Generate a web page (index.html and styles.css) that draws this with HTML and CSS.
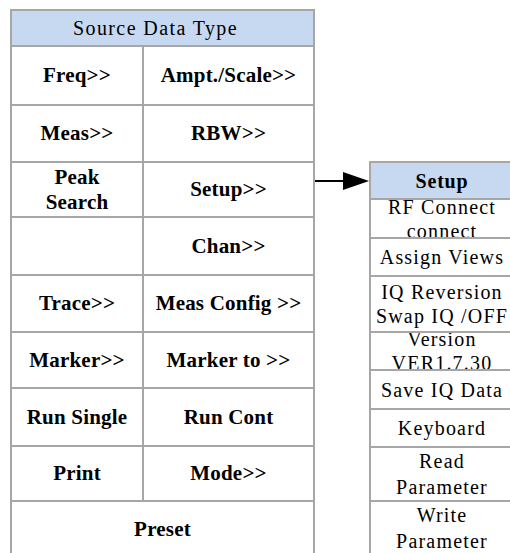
FILE: index.html
```html
<!DOCTYPE html>
<html lang="en">
<head>
  <meta charset="UTF-8" />
  <meta name="viewport" content="width=device-width, initial-scale=1" />
  <title>Source Data Type</title>
  <link rel="stylesheet" href="styles.css">
</head>
<body>
  <div class="canvas">
    <div class="menu main">
      <div class="cell head wide"><span>Source Data Type</span></div>
      <div class="cell"><span>Freq&gt;&gt;</span></div>
      <div class="cell"><span>Ampt./Scale&gt;&gt;</span></div>
      <div class="cell"><span>Meas&gt;&gt;</span></div>
      <div class="cell"><span>RBW&gt;&gt;</span></div>
      <div class="cell"><span>Peak<br>Search</span></div>
      <div class="cell"><span>Setup&gt;&gt;</span></div>
      <div class="cell"></div>
      <div class="cell"><span>Chan&gt;&gt;</span></div>
      <div class="cell"><span>Trace&gt;&gt;</span></div>
      <div class="cell"><span>Meas Config &gt;&gt;</span></div>
      <div class="cell"><span>Marker&gt;&gt;</span></div>
      <div class="cell"><span>Marker to &gt;&gt;</span></div>
      <div class="cell"><span>Run Single</span></div>
      <div class="cell"><span>Run Cont</span></div>
      <div class="cell"><span>Print</span></div>
      <div class="cell"><span>Mode&gt;&gt;</span></div>
      <div class="cell wide"><span>Preset</span></div>
    </div>

    <svg class="arrow" width="54" height="22" viewBox="0 0 54 22" aria-hidden="true">
      <line x1="0" y1="11" x2="30" y2="11" stroke="#000" stroke-width="2" />
      <polygon points="28,2 54,11 28,20" fill="#000" />
    </svg>

    <div class="menu sub">
      <div class="cell head"><span>Setup</span></div>
      <div class="cell"><span>RF Connect<br>connect</span></div>
      <div class="cell"><span>Assign Views</span></div>
      <div class="cell"><span>IQ Reversion<br>Swap IQ /OFF</span></div>
      <div class="cell"><span>Version<br>VER1.7.30</span></div>
      <div class="cell"><span>Save IQ Data</span></div>
      <div class="cell"><span>Keyboard</span></div>
      <div class="cell tall"><span>Read<br>Parameter</span></div>
      <div class="cell tall"><span>Write<br>Parameter</span></div>
    </div>
  </div>
</body>
</html>
```

FILE: styles.css
```css
html, body {
  margin: 0;
  overflow: hidden;
  background: #fff;
}

body {
  width: 510px;
  height: 553px;
  font-family: "Liberation Serif", "DejaVu Serif", serif;
  color: #000;
}

.canvas {
  display: flex;
  align-items: flex-start;
  padding: 9px 0 0 10px;
}

/* Grid menus: grey background shows through the gaps as lines */
.menu {
  display: grid;
  gap: 2px;
  padding: 2px;
  background: #a6a6a6;
  flex-shrink: 0;
}

.main {
  grid-template-columns: 130px 169px;
  grid-template-rows: 34px 57px 55px 53px 56px 55px 54px 56px 53px 55px;
}

.sub {
  margin-top: 152px;
  grid-template-columns: 142px;
  grid-template-rows: 35px 37px 36px 54px 36px 37px 36px 52px 52px;
}

.arrow {
  display: block;
  margin-top: 161px;
  flex-shrink: 0;
}

.cell {
  display: flex;
  align-items: center;
  justify-content: center;
  background: #fff;
  overflow: hidden;
  text-align: center;
}

.cell span {
  display: inline-block;
  white-space: nowrap;
  font-size: 20px;
  line-height: 24px;
  letter-spacing: 1.2px;
}

.main .cell span {
  font-weight: bold;
  font-size: 21px;
  letter-spacing: 0.2px;
  line-height: 25px;
}

.main .head span {
  font-weight: normal;
  font-size: 20px;
  letter-spacing: 1.4px;
  margin-right: 14px;
}

.sub .head span {
  font-weight: bold;
  letter-spacing: 0.8px;
}

.sub .tall span {
  line-height: 26px;
}

.head {
  background: #c6d9f1;
}

.wide {
  grid-column: span 2;
}
```
